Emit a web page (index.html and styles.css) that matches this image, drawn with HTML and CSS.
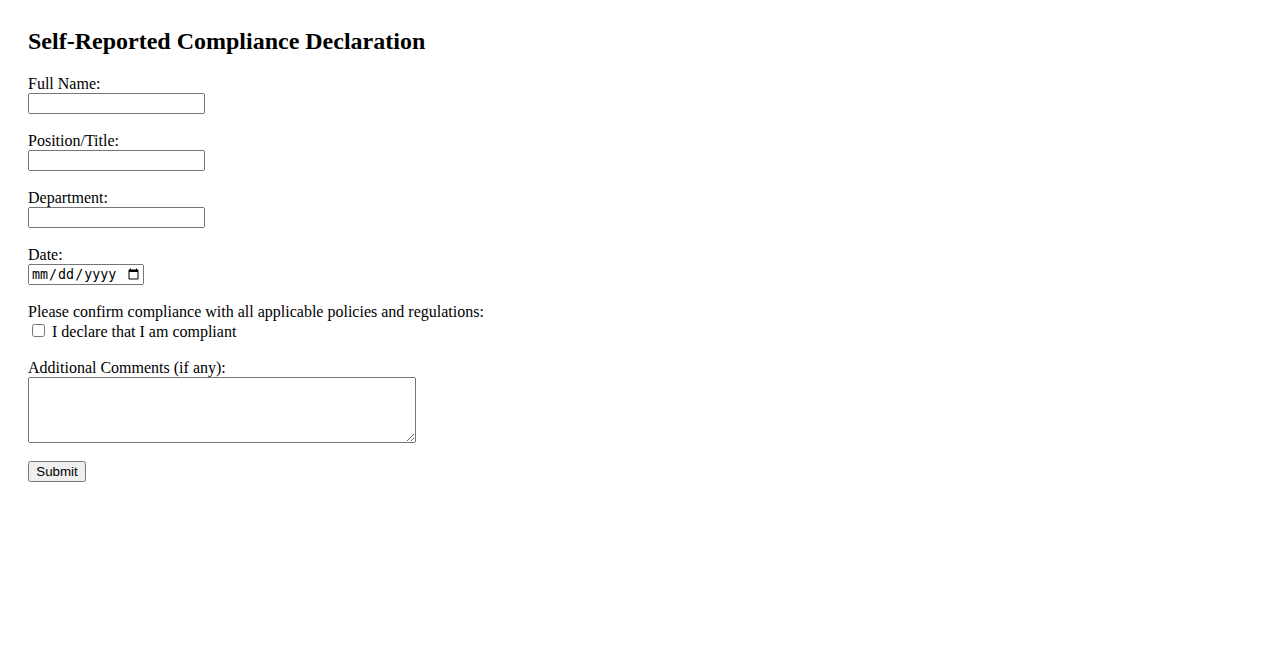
FILE: index.html
```html
<!DOCTYPE html>
<html lang="en">
<head>
    <meta charset="UTF-8">
    <meta name="viewport" content="width=device-width, initial-scale=1.0">
    <title>Self-Reported Compliance Declaration</title>
    <link rel="stylesheet" href="styles.css">
</head>
<body>
    <div class="container">
        <h2>Self-Reported Compliance Declaration</h2>

        <form id="compliance-form" class="form">
            <div class="field">
                <label for="full-name">Full Name:</label>
                <input type="text" id="full-name" name="fullName">
            </div>

            <div class="field">
                <label for="position">Position/Title:</label>
                <input type="text" id="position" name="position">
            </div>

            <div class="field">
                <label for="department">Department:</label>
                <input type="text" id="department" name="department">
            </div>

            <div class="field">
                <label for="date">Date:</label>
                <input type="date" id="date" name="date">
            </div>

            <div class="field">
                <label>Please confirm compliance with all applicable policies and regulations:</label>
                <div class="check-row">
                    <input type="checkbox" id="compliant" name="compliant">
                    <label for="compliant" class="inline">I declare that I am compliant</label>
                </div>
            </div>

            <div class="field">
                <label for="comments">Additional Comments (if any):</label>
                <textarea id="comments" name="comments" class="comments"></textarea>
            </div>

            <button type="submit" class="submit">Submit</button>
        </form>
    </div>
</body>
</html>
```

FILE: styles.css
```css
/* Base */
body {
    margin: 0;
    font-family: 'Liberation Serif', 'Times New Roman', serif;
    font-size: 16px;
    color: #000;
    background-color: #fff;
}

.container {
    padding: 28px;
}

h2 {
    font-size: 24px;
    margin: 0 0 20px 0;
}

/* Form */
.field {
    margin-bottom: 18px;
}

.field label {
    display: block;
}

.field label.inline {
    display: inline;
}

.field input[type="text"],
.field input[type="date"] {
    display: block;
    margin: 0;
    box-sizing: border-box;
    height: 21px;
}

.field input[type="text"] {
    width: 177px;
}

.field input[type="date"] {
    width: 116px;
}

.check-row {
    display: flex;
    align-items: flex-start;
    height: 19px;
    padding-top: 1px;
}

.check-row input {
    margin: 2px 7px 3px 4px;
}

.check-row label {
    line-height: 19px;
}

.comments {
    display: block;
    width: 388px;
    height: 66px;
    box-sizing: border-box;
    margin: 0;
}

.submit {
    margin: 0;
    width: 58px;
    height: 21px;
    padding: 1px 6px;
}
```
